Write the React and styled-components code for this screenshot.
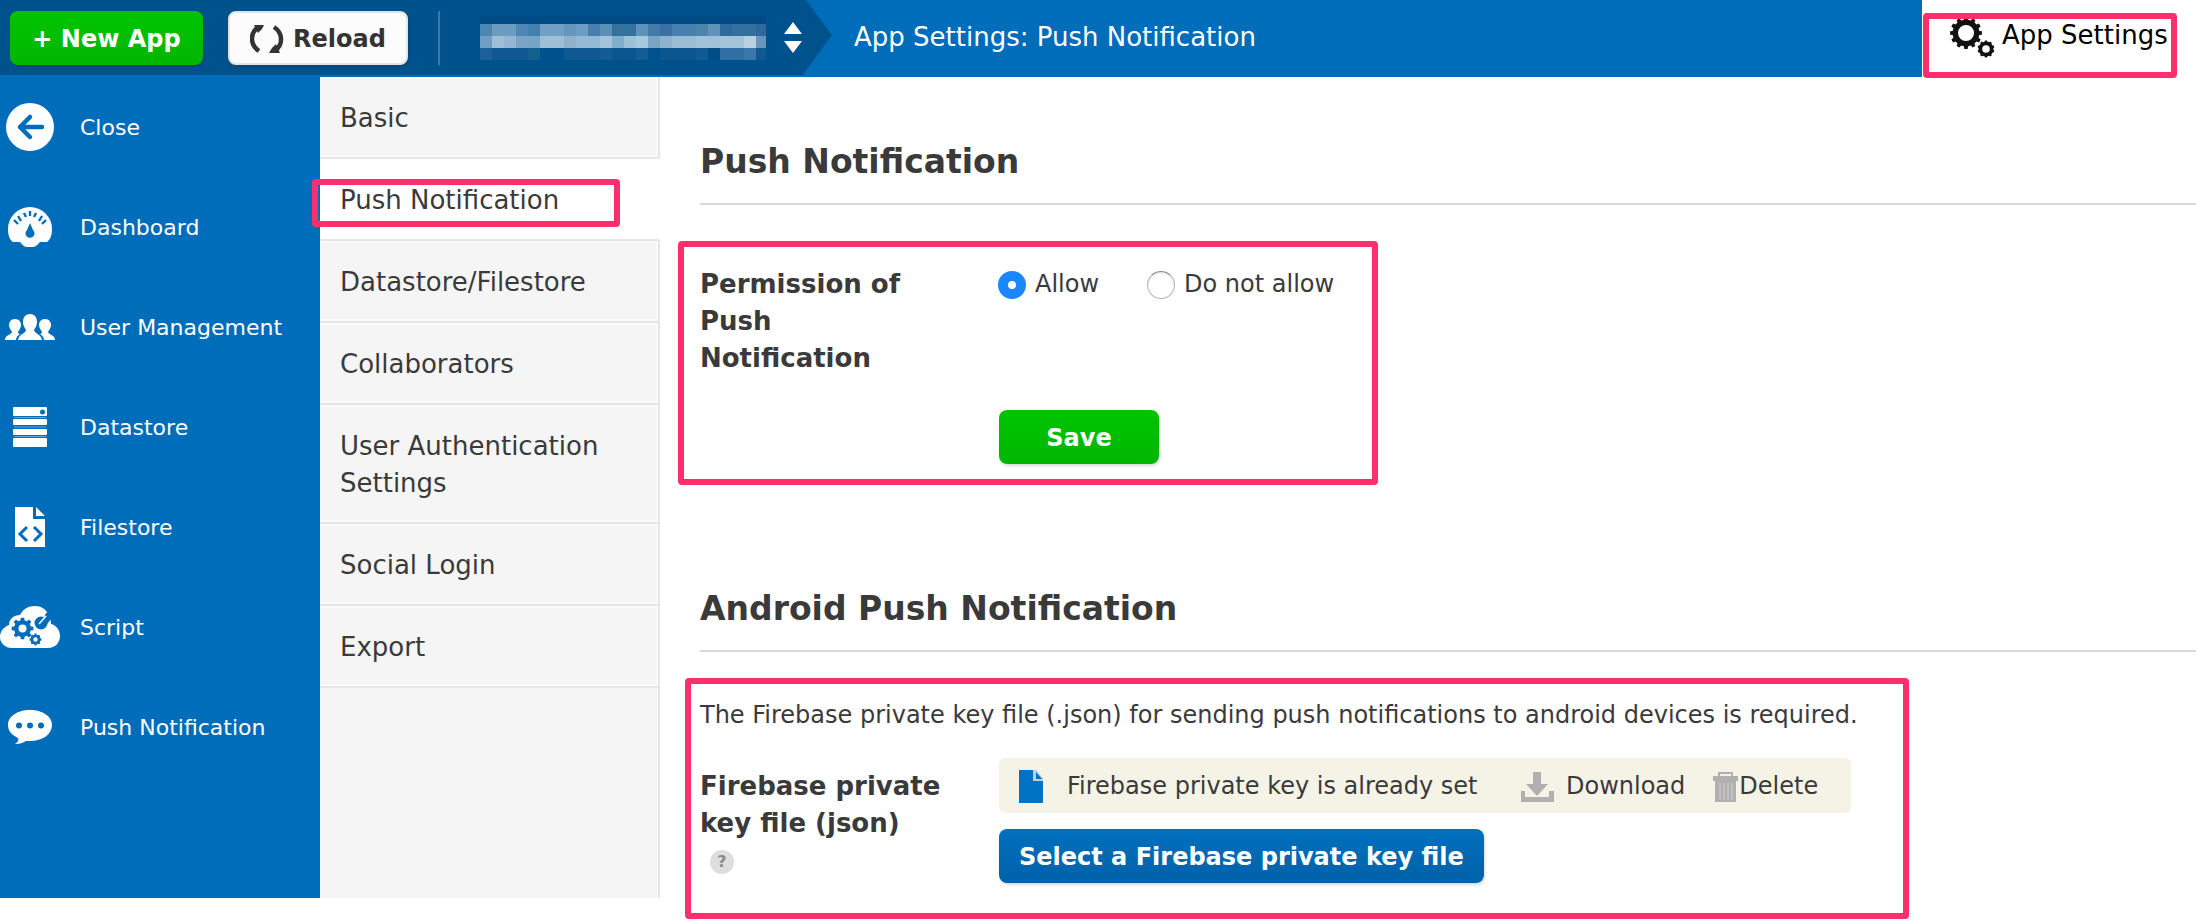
import React from "react";
import styled, { createGlobalStyle, css } from "styled-components";

const blue = "#006dba";
const navy = "#00528c";
const ink = "#3a3a3a";
const pink = "#ff2e6d";

const GlobalStyle = createGlobalStyle`
  *, *::before, *::after { box-sizing: border-box; }
  body {
    margin: 0;
    background: #fff;
    color: ${ink};
    font-family: "DejaVu Sans", Verdana, sans-serif;
    font-size: 24px;
    line-height: 37px;
  }
  h1, h2, p { margin: 0; }
  button { font: inherit; cursor: pointer; }
  a { color: inherit; text-decoration: none; }
  svg { display: block; flex: none; }
`;

/* ---------- shared parts ---------- */

const Highlight = styled.div`
  position: absolute;
  z-index: 2;
  border: 6px solid ${pink};
  border-radius: 4px;
  pointer-events: none;
`;

const tones = {
  green: css`
    background: linear-gradient(#00c400, #00b600);
    color: #fff;
  `,
  blue: css`
    background: linear-gradient(#0070be, #0061a9);
    color: #fff;
  `,
  white: css`
    background: #fcfcfc;
    color: #333;
    border: 2px solid #e4e4e4;
  `,
};

const Button = styled.button`
  display: inline-flex;
  align-items: center;
  justify-content: center;
  gap: 9px;
  height: 54px;
  min-width: ${(p) => p.$minWidth || "0"};
  padding: 2px 20px 0;
  border: 0;
  border-radius: 8px;
  font-weight: 700;
  line-height: 32px;
  white-space: nowrap;
  box-shadow: 1px 2px 3px rgba(0, 0, 0, 0.15);
  ${(p) => tones[p.$tone]}
`;

/* ---------- header ---------- */

const Header = styled.header`
  display: flex;
  height: 77px;
  background: ${blue};
`;

const AppStrip = styled.div`
  display: flex;
  align-items: center;
  flex: none;
  width: 832px;
  height: 75px;
  padding: 0 28px 0 10px;
  background: ${navy};
  clip-path: polygon(
    0 0,
    calc(100% - 26px) 0,
    100% 35px,
    calc(100% - 28px) 73px,
    calc(100% - 28px) 100%,
    0 100%
  );
`;

const Actions = styled.div`
  display: flex;
  align-items: center;
  gap: 25px;
  padding-right: 30px;
  margin-right: 40px;
  border-right: 2px solid #3a79a8;
`;

const AppPicker = styled.label`
  position: relative;
  display: flex;
  align-items: center;
  gap: 17px;
`;

const PickerSelect = styled.select`
  position: absolute;
  inset: 0;
  width: 100%;
  appearance: none;
  border: 0;
  background: transparent;
  cursor: pointer;
`;

const PageTitle = styled.h1`
  flex: 1;
  padding: 19px 22px 0;
  color: #fff;
  font-size: 26px;
  font-weight: 400;
`;

const SettingsLink = styled.a`
  position: relative;
  display: flex;
  align-items: flex-start;
  gap: 6px;
  width: 274px;
  padding: 17px 0 0 28px;
  background: #fff;
  color: #000;
  font-size: 26px;
  white-space: nowrap;
`;

const SettingsHighlight = styled(Highlight)`
  inset: 13px 19px -1px 1px;
`;

/* ---------- side navigation ---------- */

const Body = styled.div`
  display: flex;
  align-items: flex-start;
`;

const Navs = styled.div`
  display: flex;
  flex: none;
  min-height: calc(100vh - 99px);
`;

const Sidebar = styled.nav`
  width: 320px;
  background: ${blue};
`;

const SideLink = styled.a`
  display: grid;
  grid-template-columns: 60px 1fr;
  align-items: center;
  column-gap: 20px;
  height: 100px;
  color: #fff;
  font-size: 22px;

  svg { justify-self: center; }
`;

const SubNav = styled.nav`
  display: flex;
  flex-direction: column;
  width: 340px;
  background: #f5f5f5;

  &::after {
    content: "";
    flex: 1;
    border-right: 2px solid #e6e6e6;
  }
`;

const SubLink = styled.a`
  position: relative;
  padding: 23px 20px 20px;
  border: solid #e6e6e6;
  border-width: 0 2px 2px 0;
  box-shadow: inset 0 2px #fafafa, inset -2px -2px #fafafa;
  font-size: 26px;

  ${(p) =>
    p.$active &&
    css`
      background: #fff;
      border-right-color: #fff;
      box-shadow: none;
    `}
`;

const TabHighlight = styled(Highlight)`
  inset: 20px 38px 12px -8px;
`;

/* ---------- content ---------- */

const Main = styled.main`
  flex: 1;
  min-width: 0;
  padding: 65px 0 37px 40px;
`;

const Section = styled.section`
  & + & { margin-top: 125px; }
`;

const SectionTitle = styled.h2`
  padding-bottom: 21px;
  border-bottom: 2px solid #d9d9d9;
  font-size: 33px;
  font-weight: 700;
  line-height: 40px;
`;

const SectionBody = styled.div`
  position: relative;
  padding-top: ${(p) => p.$top};
`;

const PermissionHighlight = styled(Highlight)`
  top: 36px;
  bottom: -21px;
  left: -22px;
  width: 700px;
`;

const KeyHighlight = styled(Highlight)`
  top: 26px;
  bottom: -36px;
  left: -15px;
  width: 1224px;
`;

const FormRow = styled.div`
  display: grid;
  grid-template-columns: 246px minmax(0, 1fr);
  column-gap: 52px;
  align-items: start;
`;

const KeyRow = styled(FormRow)`
  padding-top: 24px;
`;

const FieldLabel = styled.div`
  padding-top: ${(p) => p.$top || "0"};
  font-size: 26px;
  font-weight: 700;
`;

const RadioGroup = styled.div`
  display: flex;
  gap: 48px;
`;

const RadioLabel = styled.label`
  display: flex;
  align-items: center;
  gap: 9px;
`;

const Radio = styled.input`
  appearance: none;
  width: 28px;
  height: 28px;
  margin: 0;
  border: 1px solid #b5b5b5;
  border-top-color: #8c8c8c;
  border-radius: 50%;
  background: #fff;
  box-shadow: inset 0 1px 2px rgba(0, 0, 0, 0.15);

  &:checked {
    border: 10px solid #1a87ff;
    box-shadow: none;
  }
`;

const SaveRow = styled.div`
  padding: 33px 0 0 299px;
  display: flex;
`;

const KeyFields = styled.div`
  display: flex;
  flex-direction: column;
  align-items: flex-start;
  gap: 16px;
  padding-left: 1px;
`;

const KeyStatus = styled.div`
  display: flex;
  align-items: center;
  width: 852px;
  height: 55px;
  padding: 2px 20px 0;
  border-radius: 6px;
  background: #f5f3e6;
  white-space: nowrap;
`;

const StatusText = styled.span`
  flex: none;
  width: 418px;
  margin: 0 36px 0 24px;
`;

const StatusAction = styled.a`
  display: flex;
  align-items: center;
  gap: ${(p) => p.$gap};
  margin-right: 28px;
`;

const HelpButton = styled.button`
  display: block;
  width: 24px;
  height: 24px;
  margin: 8px 0 0 10px;
  padding: 0;
  border: 0;
  border-radius: 50%;
  background: #dedede;
  color: #8a8a8a;
  font-size: 16px;
  font-weight: 700;
  line-height: 24px;
`;

/* ---------- icons ---------- */

function gearPath(cx, cy, outer, root, hole, teeth) {
  const step = (Math.PI * 2) / teeth;
  const pt = (r, a) =>
    `${(cx + r * Math.cos(a)).toFixed(2)} ${(cy + r * Math.sin(a)).toFixed(2)}`;
  let d = "";
  for (let i = 0; i < teeth; i++) {
    const a = i * step - Math.PI / 2;
    d += `${i ? "L" : "M"}${pt(root, a - step * 0.3)}L${pt(outer, a - step * 0.2)}`;
    d += `L${pt(outer, a + step * 0.2)}L${pt(root, a + step * 0.3)}`;
  }
  return `${d}ZM${cx - hole} ${cy}a${hole} ${hole} 0 1 0 ${hole * 2} 0a${hole} ${hole} 0 1 0 ${-hole * 2} 0Z`;
}

const Gear = ({ cx, cy, outer, root, hole, teeth, fill }) => (
  <path d={gearPath(cx, cy, outer, root, hole, teeth)} fill={fill} fillRule="evenodd" />
);

const GearsIcon = () => (
  <svg width="46" height="42" viewBox="0 0 46 42" aria-hidden="true">
    <Gear cx={16} cy={16} outer={16} root={13.5} hole={8} teeth={12} fill="#111" />
    <Gear cx={36} cy={32} outer={8.5} root={7.5} hole={3.8} teeth={10} fill="#111" />
  </svg>
);

const ReloadIcon = () => (
  <svg width="34" height="28" viewBox="0 0 34 28" fill="none" aria-hidden="true">
    <path d="M9 26C0 20 0 9 7 3" stroke="#333" strokeWidth="4.500" />
    <path d="M4 0h10l-2 4-4 4z" fill="#333" />
    <path d="M24 2c9 6 9 17 2 23" stroke="#333" strokeWidth="4.500" />
    <path d="M30 28H19l3-5 4-4z" fill="#333" />
  </svg>
);

const mosaic = [
  ["#4c86b2", "#6d9bc0", "#6d9bc0", "#4f86b5", "#4280b0", "#72a0c4", "#72a0c4", "#6697bb", "#6d9dc4", "#4780b0", "#5a8fb8", "#34719f", "#34719f", "#5f91bb", "#427aa8", "#3a70a5", "#4680ae", "#4680ae", "#4d84ae", "#5f93ba", "#2d6a9e", "#34709f", "#34709f", "#2c6a9c"],
  ["#6f9dc4", "#9dc0d8", "#94b5d5", "#7aa5c7", "#76a4c7", "#9ec0d6", "#9ec0d6", "#8eb2cc", "#95b8d4", "#95b8d4", "#a3c4dc", "#80afcb", "#9dc1d5", "#a5cadc", "#78a5c5", "#8db2cd", "#9bbdd4", "#9bbdd4", "#a0c2da", "#a0c2d8", "#a3c3d8", "#a3c3d8", "#bad0e1", "#6795bb"],
  ["#1b6099", "#0f5891", "#0f5891", "#0f5891", "#136090", "#00528c", "#00528c", "#0f5891", "#0f5891", "#0f5891", "#125c94", "#0c568f", "#0c568f", "#155c96", "#00528c", "#0c568f", "#0c568f", "#0c568f", "#115a94", "#004c86", "#2f6fa3", "#2f6fa3", "#3b77a9", "#0f5a90"],
];

const MosaicName = () => (
  <svg width="286" height="44" viewBox="0 0 286 44" aria-hidden="true" shapeRendering="crispEdges">
    <rect width="286" height="8" fill="#004b86" />
    {mosaic.map((row, y) =>
      row.map((fill, x) => (
        <rect key={`${x}-${y}`} x={x * 12} y={8 + y * 12} width="12" height="12" fill={fill} />
      ))
    )}
  </svg>
);

const SortIcon = () => (
  <svg width="20" height="32" viewBox="0 0 20 32" fill="#fff" aria-hidden="true">
    <path d="M10 0l9 12H1zM1 19h18l-9 12z" />
  </svg>
);

const CloseIcon = () => (
  <svg width="48" height="48" viewBox="0 0 48 48" aria-hidden="true">
    <circle cx="24" cy="24" r="24" fill="#fff" />
    <path
      d="M36 24H14M24 14L14 24l10 10"
      fill="none"
      stroke={blue}
      strokeWidth="4.500"
      strokeLinecap="round"
      strokeLinejoin="round"
    />
  </svg>
);

const GaugeIcon = () => (
  <svg width="44" height="40" viewBox="0 0 44 40" aria-hidden="true">
    <path
      d="M5 35C1 32 0 27 0 22a22 22 0 0 1 44 0c0 5-1 10-5 13h-7c-2 2-4 5-7 5h-6c-3 0-5-3-7-5z"
      fill="#fff"
    />
    <path
      d="M6 13l4 4M10 9l3 5M16 6l2 4M22 4v5M28 6l-2 4M34 9l-3 5M38 13l-4 4"
      stroke={blue}
      strokeWidth="2.400"
    />
    <path d="M22 16l3 7a4.500 4.500 0 1 1-6 0z" fill={blue} />
  </svg>
);

const UsersIcon = () => (
  <svg width="50" height="26" viewBox="0 0 50 26" fill="#fff" aria-hidden="true">
    <path d="M25 0c5 0 7 4 7 8s-2 6-3 8c0 3 7 4 8 10H13c1-6 8-7 8-10-1-2-3-4-3-8s2-8 7-8z" />
    <path d="M10 5c4 0 6 3 6 6s-2 5-3 7c0 1 1 2 2 2-3 2-4 4-4 6H0c0-5 6-5 7-8-1-2-3-4-3-7s2-6 6-6z" />
    <path d="M40 5c-4 0-6 3-6 6s2 5 3 7c0 1-1 2-2 2 3 2 4 4 4 6h11c0-5-6-5-7-8 1-2 3-4 3-7s-2-6-6-6z" />
  </svg>
);

const DatabaseIcon = () => (
  <svg width="34" height="40" viewBox="0 0 34 40" fill="#fff" aria-hidden="true">
    <rect width="34" height="9" rx="1" />
    <rect y="12" width="34" height="6" rx="1" />
    <rect y="22" width="34" height="6" rx="1" />
    <rect y="31" width="34" height="9" rx="1" />
    <path d="M1 10.500h32M1 20h32M1 29.500h32" stroke="#66a7d6" strokeWidth="1" />
    <circle cx="29.500" cy="5" r="2.500" fill={blue} />
  </svg>
);

const CodeFileIcon = () => (
  <svg width="30" height="40" viewBox="0 0 30 40" aria-hidden="true">
    <path d="M0 0h18v12h12v28H0zM21 0l9 9h-9z" fill="#fff" />
    <path d="M12 20l-7 7 7 7M19 20l7 7-7 7" fill="none" stroke={blue} strokeWidth="3" />
  </svg>
);

const ScriptIcon = () => (
  <svg width="60" height="42" viewBox="0 0 60 42" aria-hidden="true">
    <path
      d="M12 42C5 42 0 37 0 31c0-6 4-10 9-12 0-6 5-10 11-10C23 3 28 0 35 0c6 0 11 3 13 8 2 3 3 6 3 10 5 1 9 6 9 12 0 7-5 12-12 12z"
      fill="#fff"
    />
    <Gear cx={22.5} cy={22.5} outer={11} root={8.5} hole={4} teeth={8} fill={blue} />
    <Gear cx={35.5} cy={33.5} outer={6} root={5} hole={2.2} teeth={8} fill={blue} />
    <circle cx="41" cy="17" r="6.500" fill={blue} />
    <path d="M46 7l4-1 2 6-5 6-5-2z" fill={blue} />
    <path d="M39 18l7-8" stroke="#fff" strokeWidth="1.500" />
  </svg>
);

const BubbleIcon = () => (
  <svg width="44" height="34" viewBox="0 0 44 34" aria-hidden="true">
    <path d="M22 0c12 0 22 6 22 15s-9 16-22 16h-4c-3 2-6 3-11 3 3-2 4-4 3-6C4 25 0 21 0 15 0 6 10 0 22 0z" fill="#fff" />
    <g fill={blue}>
      <circle cx="11" cy="15.500" r="3" />
      <circle cx="22" cy="15.500" r="3" />
      <circle cx="33" cy="15.500" r="3" />
    </g>
  </svg>
);

const FileIcon = () => (
  <svg width="24" height="33" viewBox="0 0 24 33" aria-hidden="true">
    <path d="M0 0h14v11h10v22H0z" fill="#0072c3" />
    <path d="M14 0h3l7 8v3H14z" fill="#b5d3e2" />
    <path d="M17 2l6 7h-6z" fill="#0072c3" />
  </svg>
);

const DownloadIcon = () => (
  <svg width="33" height="30" viewBox="0 0 33 30" fill="#b0b0b0" aria-hidden="true">
    <path d="M12 0h8v12h7L16 24 5 12h7z" />
    <path d="M0 19h4v6h24v-6h5v11H0z" />
  </svg>
);

const TrashIcon = () => (
  <svg width="26" height="30" viewBox="0 0 26 30" aria-hidden="true">
    <path d="M6 4V1h13v3" fill="none" stroke="#b0b0b0" strokeWidth="2" />
    <path d="M0 4h25v5H0zM2 9h21v21H2z" fill="#b0b0b0" />
    <path d="M7 11v17M11 11v17M15 11v17M19 11v17" stroke="#cfcfca" strokeWidth="1" />
  </svg>
);

/* ---------- page ---------- */

const sideItems = [
  ["Close", CloseIcon],
  ["Dashboard", GaugeIcon],
  ["User Management", UsersIcon],
  ["Datastore", DatabaseIcon],
  ["Filestore", CodeFileIcon],
  ["Script", ScriptIcon],
  ["Push Notification", BubbleIcon],
];

const subItems = [
  "Basic",
  "Push Notification",
  "Datastore/Filestore",
  "Collaborators",
  "User Authentication Settings",
  "Social Login",
  "Export",
];

export default function App() {
  return (
    <>
      <GlobalStyle />
      <Header>
        <AppStrip>
          <Actions>
            <Button type="button" $tone="green" $minWidth="193px">+ New App</Button>
            <Button type="button" $tone="white" $minWidth="180px">
              <ReloadIcon />
              Reload
            </Button>
          </Actions>
          <AppPicker>
            <MosaicName />
            <SortIcon />
            <PickerSelect aria-label="Current app" />
          </AppPicker>
        </AppStrip>
        <PageTitle>App Settings: Push Notification</PageTitle>
        <SettingsLink href="#settings">
          <GearsIcon />
          App Settings
          <SettingsHighlight />
        </SettingsLink>
      </Header>

      <Body>
        <Navs>
          <Sidebar>
            {sideItems.map(([label, Icon]) => (
              <SideLink key={label} href="#">
                <Icon />
                {label}
              </SideLink>
            ))}
          </Sidebar>
          <SubNav>
            {subItems.map((label) => {
              const active = label === "Push Notification";
              return (
                <SubLink key={label} href="#" $active={active}>
                  {label}
                  {active && <TabHighlight />}
                </SubLink>
              );
            })}
          </SubNav>
        </Navs>

        <Main>
          <Section>
            <SectionTitle>Push Notification</SectionTitle>
            <SectionBody $top="61px">
              <FormRow role="radiogroup" aria-labelledby="permission-label">
                <FieldLabel id="permission-label">Permission of Push Notification</FieldLabel>
                <RadioGroup>
                  <RadioLabel>
                    <Radio type="radio" name="permission" defaultChecked />
                    Allow
                  </RadioLabel>
                  <RadioLabel>
                    <Radio type="radio" name="permission" />
                    Do not allow
                  </RadioLabel>
                </RadioGroup>
              </FormRow>
              <SaveRow>
                <Button type="button" $tone="green" $minWidth="160px">Save</Button>
              </SaveRow>
              <PermissionHighlight />
            </SectionBody>
          </Section>

          <Section>
            <SectionTitle>Android Push Notification</SectionTitle>
            <SectionBody $top="45px">
              <p>
                The Firebase private key file (.json) for sending push notifications to android
                devices is required.
              </p>
              <KeyRow>
                <FieldLabel $top="10px">
                  Firebase private key file (json)
                  <HelpButton type="button" aria-label="Help">?</HelpButton>
                </FieldLabel>
                <KeyFields>
                  <KeyStatus>
                    <FileIcon />
                    <StatusText>Firebase private key is already set</StatusText>
                    <StatusAction href="#download" $gap="12px">
                      <DownloadIcon />
                      Download
                    </StatusAction>
                    <StatusAction href="#delete" $gap="0">
                      <TrashIcon />
                      Delete
                    </StatusAction>
                  </KeyStatus>
                  <Button type="button" $tone="blue">Select a Firebase private key file</Button>
                </KeyFields>
              </KeyRow>
              <KeyHighlight />
            </SectionBody>
          </Section>
        </Main>
      </Body>
    </>
  );
}
